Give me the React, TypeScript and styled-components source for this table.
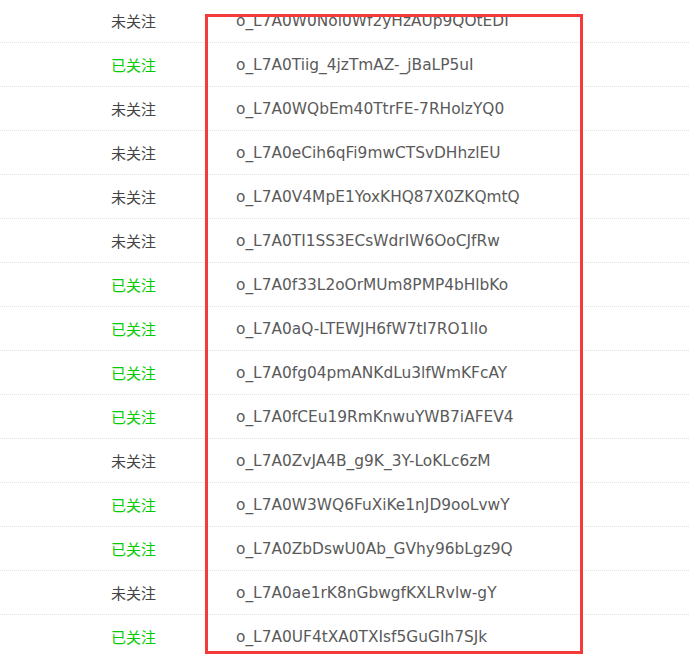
import styled, { createGlobalStyle } from "styled-components"

const GlobalStyle = createGlobalStyle`
  html, body {
    margin: 0;
    padding: 0;
    background: #ffffff;
    overflow: hidden;
  }
`

const Page = styled.div`
  position: relative;
  width: 689px;
  height: 658px;
  overflow: hidden;
`

const Table = styled.div`
  margin-top: -1px;
  display: flex;
  flex-direction: column;
`

const Row = styled.div`
  display: grid;
  grid-template-columns: 111px 125px 1fr;
  align-items: center;
  height: 43px;
  border-bottom: 1px dotted #dbe7f0;
`

const Status = styled.div<{ $followed: boolean }>`
  grid-column: 2 / 3;
  font-family: "Noto Sans CJK SC", "Microsoft YaHei", sans-serif;
  font-size: 15px;
  color: ${(p) => (p.$followed ? "#00cc00" : "#444444")};
`

const OpenId = styled.div`
  grid-column: 3 / 4;
  font-family: "DejaVu Sans", Verdana, sans-serif;
  font-size: 15.4px;
  color: #5a5a5a;
  white-space: nowrap;
`

const Highlight = styled.div`
  position: absolute;
  left: 205px;
  top: 14px;
  width: 372px;
  height: 634px;
  border: 3px solid #f53a3a;
  pointer-events: none;
`

const rows: [boolean, string][] = [
  [false, "o_L7A0W0Noi0Wf2yHzAUp9QOtEDI"],
  [true, "o_L7A0Tiig_4jzTmAZ-_jBaLP5uI"],
  [false, "o_L7A0WQbEm40TtrFE-7RHolzYQ0"],
  [false, "o_L7A0eCih6qFi9mwCTSvDHhzlEU"],
  [false, "o_L7A0V4MpE1YoxKHQ87X0ZKQmtQ"],
  [false, "o_L7A0TI1SS3ECsWdrIW6OoCJfRw"],
  [true, "o_L7A0f33L2oOrMUm8PMP4bHlbKo"],
  [true, "o_L7A0aQ-LTEWJH6fW7tI7RO1lIo"],
  [true, "o_L7A0fg04pmANKdLu3lfWmKFcAY"],
  [true, "o_L7A0fCEu19RmKnwuYWB7iAFEV4"],
  [false, "o_L7A0ZvJA4B_g9K_3Y-LoKLc6zM"],
  [true, "o_L7A0W3WQ6FuXiKe1nJD9ooLvwY"],
  [true, "o_L7A0ZbDswU0Ab_GVhy96bLgz9Q"],
  [false, "o_L7A0ae1rK8nGbwgfKXLRvlw-gY"],
  [true, "o_L7A0UF4tXA0TXIsf5GuGIh7SJk"],
]

export default function App() {
  return (
    <Page>
      <GlobalStyle />
      <Table>
        {rows.map(([followed, id]) => (
          <Row key={id}>
            <Status $followed={followed}>{followed ? "已关注" : "未关注"}</Status>
            <OpenId>{id}</OpenId>
          </Row>
        ))}
      </Table>
      <Highlight />
    </Page>
  )
}
